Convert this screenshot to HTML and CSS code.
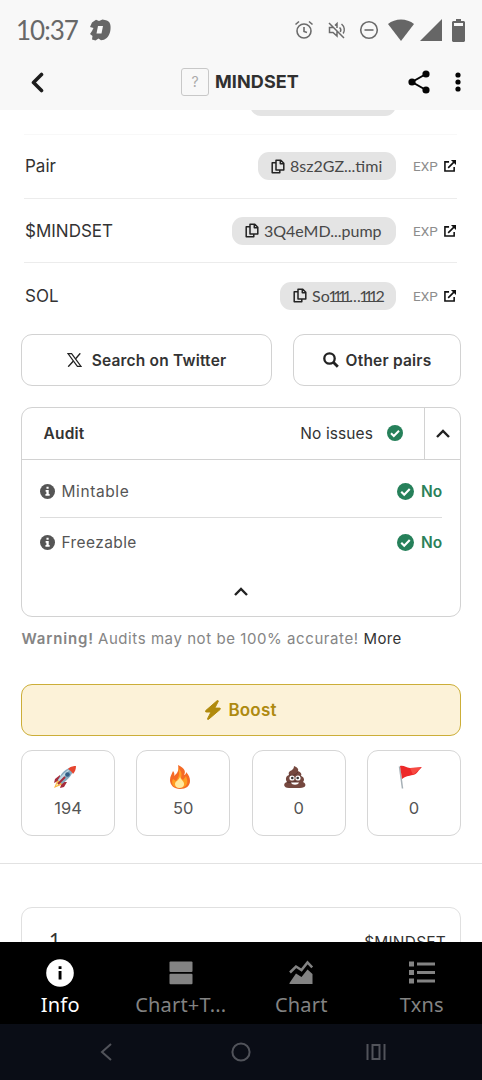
FILE: index.html
```html
<!DOCTYPE html>
<html lang="en">
<head>
<meta charset="utf-8">
<title>MINDSET</title>
<link rel="stylesheet" href="styles.css">
</head>
<body>
<svg class="defs" width="0" height="0" aria-hidden="true">
  <symbol id="copy" viewBox="0 0 14 15"><path d="M5 1.2h4.8l3 3V11H5zM9.3 1.2v3.5h3.5M4.8 3.8H1.2v9.9h7.6v-2.5" fill="none" stroke="currentColor" stroke-width="1.5" stroke-linejoin="round"/></symbol>
  <symbol id="ext" viewBox="0 0 13 13"><path d="M5.5 2H1v10h10V7.5M4.5 8.5 11 2" fill="none" stroke="currentColor" stroke-width="1.7"/><path d="M7.5 0H13v5.5z" fill="currentColor"/></symbol>
  <symbol id="check" viewBox="0 0 16 16"><circle cx="8" cy="8" r="8" fill="currentColor"/><path d="m4 8.2 2.8 2.8L12 5.7" fill="none" stroke="#fff" stroke-width="2"/></symbol>
  <symbol id="info" viewBox="0 0 16 16"><circle cx="8" cy="8" r="8" fill="currentColor"/><path d="M6.9 2.8h2.3v2.3H6.9zM6 6.5h3.3v4.2h1v1.7H5.8v-1.7h1V8.2H6z" fill="#fff"/></symbol>
  <symbol id="up" viewBox="0 0 14 9"><path d="m1 8 6-6 6 6" fill="none" stroke="currentColor" stroke-width="2.4"/></symbol>
</svg>

<header class="top">
  <div class="status">
    <span class="clock">10:37</span>
    <svg class="brand" width="22" height="22" viewBox="0 0 22 22"><path fill-rule="evenodd" fill="#666" d="M3 3.500 7 .8l3 1.200L13.500.5l3.500.8c4 .7 5 5 4.500 9-.5 5.500-3 9-6.500 10.500l-3 .5-2.500-1.800L6.500 21.500l-3.500-1 .5-3.500-2.500-2 2-3L4.500 9 1 8zM9 7 7.500 14.500h5L14 7z"/></svg>
    <span class="grow"></span>
    <svg class="st-alarm" width="20" height="20" viewBox="0 0 20 20" fill="none" stroke="#6b6b6b" stroke-width="1.6"><circle cx="10" cy="11" r="7"/><path d="M10 7v4.500l3 1M1.500 4.500 5 1.500M18.500 4.500 15 1.500"/></svg>
    <svg class="st-mute" width="20" height="20" viewBox="0 0 20 20" fill="none" stroke="#6b6b6b" stroke-width="1.500"><path d="M2 3l15 15M6 7.500H2.500v5H6l4 3.500v-4.500M8 5.500l2-2V8M12.500 7.500c1.300 1 1.500 3 .8 4.500M14.500 4c3 2.500 3.500 6.500 1.700 9.500"/></svg>
    <svg class="st-dnd" width="20" height="20" viewBox="0 0 20 20" fill="none" stroke="#6b6b6b" stroke-width="1.6"><circle cx="10" cy="10" r="8.300"/><path d="M5.500 10h9"/></svg>
    <svg class="st-wifi" width="26" height="22" viewBox="0 0 26 22"><path d="M0 5C7-1 19-1 26 5L13 22z" fill="#666"/></svg>
    <svg class="st-cell" width="22" height="22" viewBox="0 0 22 22"><path d="M22 0v22H0z" fill="#666"/></svg>
    <svg class="st-bat" width="13" height="23" viewBox="0 0 13 23"><path fill-rule="evenodd" fill="#666" d="M4 0h5v2h3l1 1v19l-1 1H1l-1-1V3l1-1h3zM2 4v3h9V4z"/></svg>
  </div>
  <div class="appbar">
    <svg class="back" width="14" height="21" viewBox="0 0 14 21"><path d="m11.500 2.500-8 8 8 8" fill="none" stroke="#1d1d1d" stroke-width="3.600" stroke-linecap="round" stroke-linejoin="round"/></svg>
    <div class="title"><span class="token">?</span><h1>MINDSET</h1></div>
    <svg class="share" width="22" height="24" viewBox="0 0 22 24"><path d="M18 4 4 12l14 8" fill="none" stroke="#050505" stroke-width="2"/><g fill="#050505"><circle cx="18" cy="4" r="3.600"/><circle cx="4" cy="12" r="3.600"/><circle cx="18" cy="20" r="3.600"/></g></svg>
    <svg class="more" width="6" height="20" viewBox="0 0 6 20" fill="#050505"><circle cx="3" cy="3" r="2.600"/><circle cx="3" cy="10" r="2.600"/><circle cx="3" cy="17" r="2.600"/></svg>
  </div>
</header>

<main class="content">
  <section class="rows">
    <div class="row first"><span class="chip wide"></span></div>
    <div class="row"><span class="name">Pair</span><span class="chip c1"><svg width="14" height="15"><use href="#copy"/></svg><span>8sz2GZ...timi</span></span><span class="exp">EXP</span><svg class="ext" width="12" height="12"><use href="#ext"/></svg></div>
    <div class="row"><span class="name">$MINDSET</span><span class="chip c2"><svg width="14" height="15"><use href="#copy"/></svg><span>3Q4eMD...pump</span></span><span class="exp">EXP</span><svg class="ext" width="12" height="12"><use href="#ext"/></svg></div>
    <div class="row"><span class="name">SOL</span><span class="chip c3"><svg width="14" height="15"><use href="#copy"/></svg><span>So<span class="ones">1111</span>...<span class="ones">111</span>2</span></span><span class="exp">EXP</span><svg class="ext" width="12" height="12"><use href="#ext"/></svg></div>
  </section>

  <div class="buttons">
    <div class="btn search"><svg width="15" height="14" viewBox="0 0 15 14" fill="none" stroke="#222"><path d="M1 .6h3.600L14 13.400h-3.600z" stroke-width="1.200"/><path d="M13.300.3 8.600 5.700M6.200 8.300 1.200 13.700" stroke-width="1.400"/></svg><span>Search on Twitter</span></div>
    <div class="btn pairs"><svg width="16" height="16" viewBox="0 0 16 16" fill="none" stroke="#222"><circle cx="6.500" cy="6.500" r="5.200" stroke-width="2.300"/><path d="m10.300 10.300 4.500 4.500" stroke-width="2.800"/></svg><span>Other pairs</span></div>
  </div>

  <section class="audit">
    <div class="audit-head">
      <strong>Audit</strong><span class="issues">No issues</span><svg class="green" width="16" height="16"><use href="#check"/></svg>
      <span class="toggle"><svg width="14" height="9"><use href="#up"/></svg></span>
    </div>
    <div class="audit-body">
      <div class="check"><svg width="15" height="15"><use href="#info"/></svg><span class="label l1">Mintable</span><svg class="green" width="17" height="17"><use href="#check"/></svg><b>No</b></div>
      <div class="check"><svg width="15" height="15"><use href="#info"/></svg><span class="label l2">Freezable</span><svg class="green" width="17" height="17"><use href="#check"/></svg><b>No</b></div>
      <div class="collapse"><svg width="14" height="9"><use href="#up"/></svg></div>
    </div>
  </section>
  <p class="warning"><b>Warning!</b><span class="msg">Audits may not be 100% accurate!</span><a>More</a></p>

  <div class="boost"><svg width="16" height="20" viewBox="0 0 16 20"><path d="M12 .8.800 10.500c-.8.800-.4 1.500.5 1.500H6L2.500 18.700c-.2.900.5 1 1.200.5L15 9.600c.8-.8.400-1.500-.5-1.500H9.800L13.300 1.300c.2-.8-.6-1-1.300-.5z" fill="#b08a0c" stroke="#b08a0c"/></svg><span>Boost</span></div>

  <div class="reactions">
    <div class="card">
      <svg width="24" height="24" viewBox="0 0 24 24"><path d="m7 10-5 4-1 4 6-3zM14 17l-3 5-4 1 2-6z" fill="#a72c3b"/><path d="m4 16-3 7 7-3 3-4-3-2z" fill="#f6b545"/><path d="m4 18-1 3 4-2z" fill="#fff0a0"/><path d="M5 15C8 8 13 3 20 2c1 6-4 12-11 17z" fill="#86aabf"/><path d="M5 15c4-5 8-9 13-12L7 17z" fill="#c2d9e4"/><path d="M15 4C18 1 21 1 23 1c0 3-1 6-3 8-1-2-3-4-5-5z" fill="#e6452f"/><circle cx="14.500" cy="9.500" r="2.300" fill="#315e87"/><path d="m12 12-7 7" stroke="#a72c3b" stroke-width="2"/></svg><span>194</span></div>
    <div class="card">
      <svg width="24" height="24" viewBox="0 0 24 24"><path d="M10 0c7 3 8 7 6 10 2-.5 2-2 2-3 3 3 4 6 4 9 0 5-4 8-10 8S2 20 2 15c0-4 2-6 3-9 1 1 2 3 1 5 4-3 5-6 4-11z" fill="#f56a25"/><path d="M10 3c4 3 4 7 3 10l2 2 3-4c2 5 3 11-6 12-8 0-9-6-7-9l3 2c3-4 4-7 2-13z" fill="#ff9d20"/><path d="M12 11c0 4 5 5 4 9-1 4-9 4-9-1 0-3 5-4 5-8z" fill="#ffe9a0"/></svg><span>50</span></div>
    <div class="card">
      <svg width="24" height="24" viewBox="0 0 24 24"><path d="M11 1c3 1 5 3 4 5 3 1 4 3 3 5 3 1 4 4 2 6 4 2 3 6-3 6H6c-6 0-6-5-2-6-2-3-1-6 2-7-1-3 1-4 3-5 1-1 2-2 2-4z" fill="#75483f"/><path d="M6 10c4 1 7 0 9-3M4 17c5 1 11 0 14-6" fill="none" stroke="#55332f"/><circle cx="9" cy="13" r="2.600" fill="#fff"/><circle cx="15" cy="13" r="2.600" fill="#fff"/><circle cx="9.300" cy="13" r="1.300" fill="#333"/><circle cx="14.700" cy="13" r="1.300" fill="#333"/><path d="M8 17.500h8c-1 3-7 3-8 0z" fill="#fff"/></svg><span>0</span></div>
    <div class="card">
      <svg width="24" height="24" viewBox="0 0 24 24"><path d="m1.500 1.500 3 22" stroke="#a6b0b6" stroke-width="1.500"/><path d="M2 1c4-1 6 2 10 2s8-1 12-1c-4 3-4 7-9 8s-7 1-11 4z" fill="#ed2828"/><path d="m12 3 3 7 8-7z" fill="#f74a42"/></svg><span>0</span></div>
  </div>

  <div class="swap"><div class="swap-card"><span class="one">1</span><span class="unit">$MINDSET</span></div></div>
</main>

<nav class="tabs">
  <div class="tab active"><svg width="28" height="28" viewBox="0 0 28 28"><circle cx="14" cy="14" r="13.800" fill="#fff"/><path d="M12.600 7.200h2.900V10h-2.900zM12.600 12h2.900v8.500h-2.900z" fill="#000"/></svg><span>Info</span></div>
  <div class="tab"><svg width="28" height="28" viewBox="0 0 28 28" fill="#838383"><rect x="2.500" y="2.500" width="23" height="10.500" rx="1"/><rect x="2.500" y="14.800" width="23" height="10.500" rx="1"/></svg><span>Chart+T...</span></div>
  <div class="tab"><svg width="28" height="28" viewBox="0 0 28 28"><path d="M2.500 25v-1L9 14.500l5.500 3.500L20.500 10.500l5 4.500v10z" fill="#838383"/><path d="m3 13.500 6-6 5.500 3.500 6-7.500 4.700 4.800" fill="none" stroke="#838383" stroke-width="2.500"/></svg><span>Chart</span></div>
  <div class="tab"><svg width="28" height="28" viewBox="0 0 28 28" fill="#838383"><path d="M1 2.500h5v5H1zM1 11h5v5H1zM1 19.500h5v5H1zM9 3.500h18v3H9zM9 12h18v3H9zM9 20.500h18v3H9z"/></svg><span>Txns</span></div>
</nav>
<footer class="system">
  <svg width="12" height="18" viewBox="0 0 12 18"><path d="M11 1 2 9l9 8" fill="none" stroke="#51535a" stroke-width="2"/></svg>
  <svg class="home" width="20" height="20" viewBox="0 0 20 20"><circle cx="10" cy="10" r="8.600" fill="none" stroke="#51535a" stroke-width="2"/></svg>
  <svg class="recent" width="20" height="18" viewBox="0 0 20 18"><path d="M1.500 1v16M18.500 1v16M6.500 2h7v14h-7z" fill="none" stroke="#51535a" stroke-width="2"/></svg>
</footer>
</body>
</html>
```
FILE: styles.css
```css
* { box-sizing: border-box; }
body { margin: 0; width: 482px; height: 1080px; overflow: hidden; display: flex; flex-direction: column; background: #fff; color: #333; font-family: Inter, "Noto Sans", sans-serif; }
svg { display: block; flex: none; }
.defs { position: absolute; }
.grow { flex: 1; }
span, b, strong, h1 { white-space: nowrap; }

.top { height: 110px; flex: none; background: #f8f8f8; }
.status { height: 60px; display: flex; align-items: center; padding: 0 17px 0 16px; }
.clock { font: 400 26px/30px Lato, sans-serif; color: #686868; letter-spacing: -1px; }
.brand { margin-left: 11px; }
.st-mute { margin-left: 13px; }
.st-dnd { margin-left: 12px; }
.st-wifi { margin-left: 9px; }
.st-cell { margin-left: 6px; }
.st-bat { margin-left: 10px; }
.appbar { height: 44px; display: flex; align-items: center; padding: 0 21px 0 30px; }
.title { flex: 1; display: flex; align-items: center; padding-left: 137px; }
.token { width: 28px; height: 28px; border: 1px solid #c8c8c8; border-radius: 3px; color: #aaa; font-size: 14px; line-height: 26px; text-align: center; }
h1 { margin: 0 0 0 6px; font: 700 18px/24px Inter, sans-serif; color: #303030; letter-spacing: .1px; }
.more { margin-left: 25px; }

.content { height: 832px; flex: none; overflow: hidden; }
.rows { padding: 0 25px 0 24px; margin-top: -39.500px; }
.row { height: 64.300px; display: flex; align-items: center; border-bottom: 1px solid #ececec; }
.row:last-child { border-bottom: 0; }
.row.first { border-bottom-color: #f8f8f8; }
.name { margin-right: auto; padding-left: 1px; font-size: 17px; }
.chip { height: 28px; border-radius: 11px; background: #e4e4e4; display: flex; align-items: center; padding-left: 13px; gap: 5px; font: 400 16px/28px Lato, sans-serif; color: #484848; }
.chip svg { color: #222; }
.wide { width: 146px; margin-left: auto; margin-right: 61px; }
.c1 { width: 138px; }
.c2 { width: 164px; }
.c3 { width: 116px; }
.ones { letter-spacing: -4.500px; margin-right: 2px; margin-left: -1.500px; }
.exp { margin-left: 17px; width: 31px; font: 400 13.500px/20px Roboto, sans-serif; color: #8d8d8d; }
.ext { color: #111; margin-right: 1px; }

.buttons { display: grid; grid-template-columns: 251px 168px; gap: 21px; padding-left: 21px; margin-top: 6.500px; }
.btn { height: 52px; border: 1.500px solid #d2d2d2; border-radius: 11px; display: flex; align-items: center; justify-content: center; font-weight: 600; font-size: 15.500px; letter-spacing: .2px; }
.search { gap: 10px; }
.pairs { gap: 7px; }

.audit { width: 440px; height: 210px; margin: 21px 0 0 21px; border: 1.500px solid #d2d2d2; border-radius: 11px; }
.audit-head { height: 51.500px; display: flex; align-items: center; border-bottom: 1.500px solid #d2d2d2; padding-left: 21.500px; }
.audit-head strong { flex: 1; font-weight: 600; font-size: 15.500px; letter-spacing: .2px; }
.issues { margin-right: 14px; font-size: 15.500px; letter-spacing: .1px; }
.green { color: #26805a; }
.toggle { width: 36px; height: 100%; margin-left: 21px; border-left: 1px solid #d2d2d2; display: flex; align-items: center; justify-content: center; color: #222; }
.audit-body { padding: 7px 18px 0 17.500px; }
.check { height: 50px; display: flex; align-items: center; color: #555; font-size: 15.500px; }
.check + .check { border-top: 1.500px solid #ddd; }
.label { flex: 1; margin-left: 7px; }
.l1 { letter-spacing: .6px; }
.l2 { letter-spacing: .4px; }
.check b { margin-left: 7px; width: 21px; color: #2b8159; font-weight: 600; }
.collapse { height: 50px; display: flex; align-items: center; justify-content: center; color: #222; }
.warning { display: flex; margin: 11px 0 0 21.500px; font-size: 15px; line-height: 22px; height: 22px; color: #858585; white-space: nowrap; }
.warning b { font-weight: 600; letter-spacing: .85px; }
.msg { margin-left: 4px; letter-spacing: .57px; }
.warning a { margin-left: 5px; color: #333; letter-spacing: .3px; }

.boost { width: 440px; height: 52px; margin: 33.500px 0 0 21px; border: 1.500px solid #ccae38; border-radius: 11px; background: #fcf2d8; color: #ae8a10; display: flex; align-items: center; justify-content: center; gap: 7px; font-weight: 600; font-size: 17px; letter-spacing: .2px; }
.reactions { display: grid; grid-template-columns: repeat(4, 94px); gap: 21.300px; margin: 14px 0 0 21px; }
.card { height: 86px; border: 1.500px solid #d6d6d6; border-radius: 11px; display: flex; flex-direction: column; align-items: center; padding-top: 14px; font-size: 16.500px; line-height: 24px; color: #555; gap: 7px; }
.card svg { margin-right: 7px; }
.swap { margin-top: 27px; border-top: 1px solid #e2e2e2; padding: 43px 21px 0; }
.swap-card { height: 80px; border: 1.500px solid #e0e0e0; border-radius: 11px; display: flex; justify-content: space-between; align-items: flex-start; padding: 19.500px 14px 0 27px; }
.one { font: 400 20px/24px Lato, sans-serif; }
.unit { font-size: 15.500px; line-height: 24px; margin-top: 4px; letter-spacing: .2px; }

.tabs { height: 82px; flex: none; background: #000; display: grid; grid-template-columns: repeat(4, 1fr); padding-top: 17px; color: #838383; }
.tab { display: flex; flex-direction: column; align-items: center; gap: 5px; font: 400 20px/26px "Noto Sans", sans-serif; letter-spacing: .2px; }
.active { color: #fff; }
.system { height: 56px; flex: none; background: #0a0d16; display: flex; align-items: center; padding-left: 100px; }
.home { margin-left: 119px; }
.recent { margin-left: 114.500px; }
```
